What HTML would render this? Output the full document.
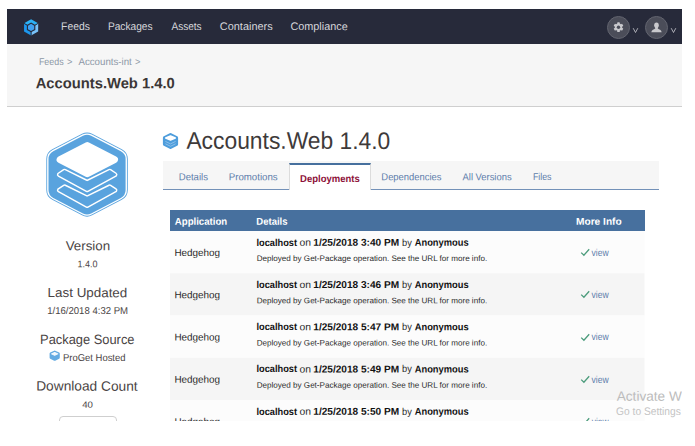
<!DOCTYPE html>
<html>
<head>
<meta charset="utf-8">
<title>Accounts.Web 1.4.0</title>
<style>
html,body{margin:0;padding:0;background:#fff;}
body{width:695px;height:446px;position:relative;overflow:hidden;font-family:"Liberation Sans",sans-serif;}
#page{position:absolute;left:0;top:0;width:682px;height:421px;overflow:hidden;background:#fff;}
.abs{position:absolute;}
.t{position:absolute;left:0;top:0;white-space:pre;transform-origin:0 0;font-family:"Liberation Sans",sans-serif;}
#nav{left:7px;top:9px;width:675px;height:35px;background:#272a3a;}
#hdr{left:7px;top:44px;width:675px;height:62px;background:#f6f6f6;border-bottom:1px solid #cfcfcf;}
.circ{position:absolute;width:21px;height:21px;border-radius:50%;background:#4b4d59;border:1px solid #62646f;}
#tabbar{left:163px;top:161px;width:496px;height:28px;background:#f6f6f6;border-bottom:1px solid #7391b8;}
#tabact{left:289px;top:163px;width:80px;height:25px;background:#fff;border-top:2px solid #47709e;border-left:1px solid #dcdcdc;border-right:1px solid #dcdcdc;}
#thead{left:170px;top:210px;width:475px;height:21px;background:#47709e;}
.row{position:absolute;left:170px;width:475px;height:42px;}
.odd{background:#fbfbfb;}
.even{background:#f4f4f4;}
#btn{left:59px;top:416px;width:56px;height:20px;border:1px solid #cfcfcf;border-radius:4px;background:#fff;}
</style>
</head>
<body>
<div id="page">
<div id="nav" class="abs"></div>
<div id="hdr" class="abs"></div>

<!-- nav logo -->
<svg class="abs" style="left:23px;top:18px" width="17" height="19" viewBox="0 0 17 19">
  <polygon points="8.10,9.45 1.04,5.37 8.10,1.30 15.16,5.37" fill="#2cb2f6"/>
  <polygon points="8.10,9.45 1.04,5.37 1.04,13.53 8.10,17.60" fill="#1c97ee"/>
  <polygon points="8.10,9.45 15.16,5.37 15.16,13.52 8.10,17.60" fill="#79c2f9"/>
  <path d="M8.1 9.45 L1.04 5.37 M8.1 9.45 L15.16 5.37 M8.1 9.45 L8.10 17.60" stroke="#272a3a" stroke-width="1" fill="none"/>
  <polygon points="8.10,4.55 12.34,7.00 12.34,11.90 8.10,14.35 3.86,11.90 3.86,7.00" fill="#272a3a"/>
  <polygon points="8.10,5.85 11.22,7.65 11.22,11.25 8.10,13.05 4.98,11.25 4.98,7.65" fill="#3fa1f1"/>
</svg>

<!-- nav right icons -->
<div class="circ" style="left:607px;top:16px"></div>
<div class="circ" style="left:645px;top:16px"></div>
<svg class="abs" style="left:607px;top:16px" width="23" height="23" viewBox="0 0 23 23">
  <g fill="#c9c9cd">
    <circle cx="11.5" cy="11.2" r="3.6"/>
    <g>
      <rect x="10.2" y="6.3" width="2.6" height="9.8" rx="0.6"/>
      <rect x="10.2" y="6.3" width="2.6" height="9.8" rx="0.6" transform="rotate(60 11.5 11.2)"/>
      <rect x="10.2" y="6.3" width="2.6" height="9.8" rx="0.6" transform="rotate(120 11.5 11.2)"/>
    </g>
  </g>
  <circle cx="11.5" cy="11.2" r="1.7" fill="#4b4d59"/>
</svg>
<svg class="abs" style="left:645px;top:16px" width="23" height="23" viewBox="0 0 23 23">
  <g fill="#c9c9cd">
    <ellipse cx="11.5" cy="9.3" rx="2.3" ry="2.8"/>
    <path d="M6.3 16.2 C6.6 13.8 9 13.6 10.2 12.6 L10.2 11 L12.8 11 L12.8 12.6 C14 13.6 16.4 13.8 16.7 16.2 Z"/>
  </g>
</svg>
<svg class="abs" style="left:632px;top:27px" width="8" height="7" viewBox="0 0 8 7"><path d="M1.2 1.2 L3.5 5.5 L5.8 1.2" fill="none" stroke="#b9b9bf" stroke-width="0.9"/></svg>
<svg class="abs" style="left:669.5px;top:27px" width="8" height="7" viewBox="0 0 8 7"><path d="M1.2 1.2 L3.5 5.5 L5.8 1.2" fill="none" stroke="#b9b9bf" stroke-width="0.9"/></svg>

<!-- big package logo -->
<svg class="abs" style="left:39.7px;top:125px" width="95" height="100" viewBox="40 125 95 100">
  <g stroke-linejoin="round">
    <polygon points="87.05,143.6 116.8,159.1 116.8,190.1 87.05,205.6 57.3,190.1 57.3,159.1" fill="#59a3de" stroke="#59a3de" stroke-width="22"/>
    <polygon points="87.05,143.6 116.8,159.1 116.8,190.1 87.05,205.6 57.3,190.1 57.3,159.1" fill="#ffffff" stroke="#ffffff" stroke-width="20.3"/>
    <polygon points="87.05,143.6 116.8,159.1 116.8,190.1 87.05,205.6 57.3,190.1 57.3,159.1" fill="#59a3de" stroke="#59a3de" stroke-width="17.6"/>
    <polygon points="87.3,145.6 114.5,159.65 87.3,173.7 60.1,159.65" fill="#ffffff" stroke="#ffffff" stroke-width="7"/>
    <polygon points="59.2,174.6 64.6,171 87.15,182.2 109.7,171 115.1,174.6 87.15,189.9" fill="#ffffff" stroke="#ffffff" stroke-width="4.7"/>
    <polygon points="59.2,174.6 64.6,171 87.15,182.2 109.7,171 115.1,174.6 87.15,189.9" fill="#59a3de" stroke="#59a3de" stroke-width="1.8"/>
    <g transform="translate(0,15.7)">
      <polygon points="59.2,174.6 64.6,171 87.15,182.2 109.7,171 115.1,174.6 87.15,189.9" fill="#ffffff" stroke="#ffffff" stroke-width="4.7"/>
      <polygon points="59.2,174.6 64.6,171 87.15,182.2 109.7,171 115.1,174.6 87.15,189.9" fill="#59a3de" stroke="#59a3de" stroke-width="1.8"/>
    </g>
  </g>
</svg>

<!-- h1 icon -->
<svg class="abs" style="left:162px;top:131.5px" width="17" height="18" viewBox="0 0 17 18">
  <g stroke-linejoin="round">
    <polygon points="8.5,2.8 14.4,5.7 14.4,12.3 8.5,15.2 2.6,12.3 2.6,5.7" fill="#4e9ddc" stroke="#4e9ddc" stroke-width="3.4"/>
    <polygon points="8.5,4 13.3,6 8.5,8 3.7,6" fill="#ffffff" stroke="#ffffff" stroke-width="1.5"/>
    <path d="M3.4 9.4 L8.5 11.9 L13.6 9.4 M3.4 11.8 L8.5 14.3 L13.6 11.8" fill="none" stroke="#9cc8ec" stroke-width="0.8"/>
  </g>
</svg>

<!-- small ProGet hosted icon -->
<svg class="abs" style="left:49.3px;top:349.9px" width="11.4" height="11.4" viewBox="0 0 17 18" preserveAspectRatio="none">
  <g stroke-linejoin="round">
    <polygon points="8.5,2.6 14.4,5.6 14.4,12.4 8.5,15.4 2.6,12.4 2.6,5.6" fill="#64abe2" stroke="#64abe2" stroke-width="3.4"/>
    <polygon points="8.5,3.9 13.2,6.1 8.5,8.3 3.8,6.1" fill="#f4f9fd" stroke="#f4f9fd" stroke-width="1.6"/>
  </g>
</svg>

<div id="btn" class="abs"></div>

<div id="tabbar" class="abs"></div>
<div id="tabact" class="abs"></div>

<div id="thead" class="abs"></div>
<svg class="abs" style="left:170px;top:231px" width="475" height="190" viewBox="0 0 475 190">
  <rect x="0" y="0.0" width="474.5" height="42.25" fill="#fcfcfc"/>
  <rect x="0" y="42.25" width="474.5" height="42.25" fill="#f5f5f5"/>
  <rect x="0" y="84.5" width="474.5" height="42.25" fill="#fcfcfc"/>
  <rect x="0" y="126.75" width="474.5" height="42.25" fill="#f5f5f5"/>
  <rect x="0" y="169.0" width="474.5" height="42.25" fill="#fcfcfc"/>
</svg>

<!-- check marks -->
<svg class="abs" style="left:579.5px;top:248.00px" width="11" height="9" viewBox="0 0 11 9"><path d="M1.2 4.6 L3.9 7.2 L9.2 1.3" fill="none" stroke="#4c9c7c" stroke-width="1.3"/></svg>
<svg class="abs" style="left:579.5px;top:290.25px" width="11" height="9" viewBox="0 0 11 9"><path d="M1.2 4.6 L3.9 7.2 L9.2 1.3" fill="none" stroke="#4c9c7c" stroke-width="1.3"/></svg>
<svg class="abs" style="left:579.5px;top:332.50px" width="11" height="9" viewBox="0 0 11 9"><path d="M1.2 4.6 L3.9 7.2 L9.2 1.3" fill="none" stroke="#4c9c7c" stroke-width="1.3"/></svg>
<svg class="abs" style="left:579.5px;top:374.75px" width="11" height="9" viewBox="0 0 11 9"><path d="M1.2 4.6 L3.9 7.2 L9.2 1.3" fill="none" stroke="#4c9c7c" stroke-width="1.3"/></svg>
<svg class="abs" style="left:579.5px;top:417.00px" width="11" height="9" viewBox="0 0 11 9"><path d="M1.2 4.6 L3.9 7.2 L9.2 1.3" fill="none" stroke="#4c9c7c" stroke-width="1.3"/></svg>

<span class="t" style="font-size:11.0px;line-height:11.0px;color:#d6d6db;transform:translate(61.10px,21.10px) rotate(.03deg) scaleX(0.9403)">Feeds</span>
<span class="t" style="font-size:11.0px;line-height:11.0px;color:#d6d6db;transform:translate(107.91px,21.10px) rotate(.03deg) scaleX(0.9253)">Packages</span>
<span class="t" style="font-size:11.0px;line-height:11.0px;color:#d6d6db;transform:translate(171.45px,21.10px) rotate(.03deg) scaleX(0.9138)">Assets</span>
<span class="t" style="font-size:11.0px;line-height:11.0px;color:#d6d6db;transform:translate(219.85px,21.10px) rotate(.03deg) scaleX(0.9923)">Containers</span>
<span class="t" style="font-size:11.0px;line-height:11.0px;color:#d6d6db;transform:translate(290.43px,21.10px) rotate(.03deg) scaleX(0.9863)">Compliance</span>
<span class="t" style="font-size:10.0px;line-height:10.0px;color:#8d98a6;transform:translate(38.90px,57.00px) rotate(.03deg) scaleX(0.8883)">Feeds</span>
<span class="t" style="font-size:10.0px;line-height:10.0px;color:#8d98a6;transform:translate(66.95px,57.00px) rotate(.03deg) scaleX(0.9228)">&gt;</span>
<span class="t" style="font-size:10.0px;line-height:10.0px;color:#8d98a6;transform:translate(78.42px,57.00px) rotate(.03deg) scaleX(0.9705)">Accounts-int</span>
<span class="t" style="font-size:10.0px;line-height:10.0px;color:#8d98a6;transform:translate(135.07px,57.00px) rotate(.03deg) scaleX(0.9331)">&gt;</span>
<span class="t" style="font-size:15.0px;line-height:15.0px;color:#3b3636;font-weight:700;transform:translate(35.70px,75.30px) rotate(.03deg) scaleX(0.9833)">Accounts.Web 1.4.0</span>
<span class="t" style="font-size:13.0px;line-height:13.0px;color:#4a4444;transform:translate(65.68px,239.20px) rotate(.03deg) scaleX(1.0257)">Version</span>
<span class="t" style="font-size:9.5px;line-height:9.5px;color:#4a4444;transform:translate(77.41px,259.30px) rotate(.03deg) scaleX(0.9459)">1.4.0</span>
<span class="t" style="font-size:13.0px;line-height:13.0px;color:#4a4444;transform:translate(47.62px,286.10px) rotate(.03deg) scaleX(1.0300)">Last Updated</span>
<span class="t" style="font-size:10.0px;line-height:10.0px;color:#4a4444;transform:translate(47.18px,305.90px) rotate(.03deg) scaleX(0.9574)">1/16/2018 4:32 PM</span>
<span class="t" style="font-size:13.5px;line-height:13.5px;color:#4a4444;transform:translate(40.05px,332.90px) rotate(.03deg) scaleX(0.9535)">Package Source</span>
<span class="t" style="font-size:10.0px;line-height:10.0px;color:#4a4444;transform:translate(63.05px,352.90px) rotate(.03deg) scaleX(0.9442)">ProGet Hosted</span>
<span class="t" style="font-size:13.5px;line-height:13.5px;color:#4a4444;transform:translate(36.21px,379.60px) rotate(.03deg) scaleX(1.0157)">Download Count</span>
<span class="t" style="font-size:9.0px;line-height:9.0px;color:#4a4444;transform:translate(82.20px,400.70px) rotate(.03deg) scaleX(1.0740)">40</span>
<span class="t" style="font-size:24.0px;line-height:24.0px;color:#3e3a3a;transform:translate(186.41px,128.80px) rotate(.03deg) scaleX(0.9511)">Accounts.Web 1.4.0</span>
<span class="t" style="font-size:10.0px;line-height:10.0px;color:#5d7dab;transform:translate(178.75px,172.20px) rotate(.03deg) scaleX(0.9546)">Details</span>
<span class="t" style="font-size:10.0px;line-height:10.0px;color:#5d7dab;transform:translate(228.74px,172.20px) rotate(.03deg) scaleX(0.9669)">Promotions</span>
<span class="t" style="font-size:10.0px;line-height:10.0px;color:#8d0f38;font-weight:700;transform:translate(300.04px,173.90px) rotate(.03deg) scaleX(0.9506)">Deployments</span>
<span class="t" style="font-size:10.0px;line-height:10.0px;color:#5d7dab;transform:translate(381.36px,172.20px) rotate(.03deg) scaleX(0.9397)">Dependencies</span>
<span class="t" style="font-size:10.0px;line-height:10.0px;color:#5d7dab;transform:translate(462.53px,172.20px) rotate(.03deg) scaleX(0.9394)">All Versions</span>
<span class="t" style="font-size:10.0px;line-height:10.0px;color:#5d7dab;transform:translate(532.88px,172.20px) rotate(.03deg) scaleX(0.8814)">Files</span>
<span class="t" style="font-size:10.0px;line-height:10.0px;color:#ffffff;font-weight:700;transform:translate(174.82px,216.80px) rotate(.03deg) scaleX(0.9621)">Application</span>
<span class="t" style="font-size:10.0px;line-height:10.0px;color:#ffffff;font-weight:700;transform:translate(256.35px,216.80px) rotate(.03deg) scaleX(0.9502)">Details</span>
<span class="t" style="font-size:10.0px;line-height:10.0px;color:#ffffff;font-weight:700;transform:translate(576.01px,216.80px) rotate(.03deg) scaleX(1.0150)">More Info</span>
<span class="t" style="font-size:13.5px;line-height:13.5px;color:#bcbcbc;transform:translate(616.75px,389.80px) rotate(.03deg) scaleX(1.0079)">Activate W</span>
<span class="t" style="font-size:11.0px;line-height:11.0px;color:#c4c4c4;transform:translate(616.11px,405.80px) rotate(.03deg) scaleX(0.9280)">Go to Settings</span>
<span class="t" style="font-size:10.0px;line-height:10.0px;color:#2a2a2a;transform:translate(174.45px,248.10px) rotate(.03deg) scaleX(0.9882)">Hedgehog</span>
<span class="t" style="font-size:10.0px;line-height:10.0px;color:#111111;font-weight:700;transform:translate(256.47px,237.70px) rotate(.03deg) scaleX(0.9226)">localhost</span>
<span class="t" style="font-size:10.0px;line-height:10.0px;color:#2a2a2a;transform:translate(299.56px,237.70px) rotate(.03deg) scaleX(1.0321)">on</span>
<span class="t" style="font-size:10.0px;line-height:10.0px;color:#111111;font-weight:700;transform:translate(313.30px,237.70px) rotate(.03deg) scaleX(1.0094)">1/25/2018 3:40 PM</span>
<span class="t" style="font-size:10.0px;line-height:10.0px;color:#2a2a2a;transform:translate(402.03px,237.70px) rotate(.03deg) scaleX(0.9288)">by</span>
<span class="t" style="font-size:10.0px;line-height:10.0px;color:#111111;font-weight:700;transform:translate(414.72px,237.70px) rotate(.03deg) scaleX(0.9332)">Anonymous</span>
<span class="t" style="font-size:8.0px;line-height:8.0px;color:#2a2a2a;transform:translate(256.72px,254.90px) rotate(.03deg) scaleX(1.0094)">Deployed by Get-Package operation. See the URL for more info.</span>
<span class="t" style="font-size:10.0px;line-height:10.0px;color:#5d7dab;transform:translate(591.48px,247.80px) rotate(.03deg) scaleX(0.8577)">view</span>
<span class="t" style="font-size:10.0px;line-height:10.0px;color:#2a2a2a;transform:translate(174.45px,290.35px) rotate(.03deg) scaleX(0.9882)">Hedgehog</span>
<span class="t" style="font-size:10.0px;line-height:10.0px;color:#111111;font-weight:700;transform:translate(256.47px,279.95px) rotate(.03deg) scaleX(0.9226)">localhost</span>
<span class="t" style="font-size:10.0px;line-height:10.0px;color:#2a2a2a;transform:translate(299.56px,279.95px) rotate(.03deg) scaleX(1.0321)">on</span>
<span class="t" style="font-size:10.0px;line-height:10.0px;color:#111111;font-weight:700;transform:translate(313.30px,279.95px) rotate(.03deg) scaleX(1.0094)">1/25/2018 3:46 PM</span>
<span class="t" style="font-size:10.0px;line-height:10.0px;color:#2a2a2a;transform:translate(402.03px,279.95px) rotate(.03deg) scaleX(0.9288)">by</span>
<span class="t" style="font-size:10.0px;line-height:10.0px;color:#111111;font-weight:700;transform:translate(414.72px,279.95px) rotate(.03deg) scaleX(0.9332)">Anonymous</span>
<span class="t" style="font-size:8.0px;line-height:8.0px;color:#2a2a2a;transform:translate(256.72px,297.15px) rotate(.03deg) scaleX(1.0094)">Deployed by Get-Package operation. See the URL for more info.</span>
<span class="t" style="font-size:10.0px;line-height:10.0px;color:#5d7dab;transform:translate(591.48px,290.05px) rotate(.03deg) scaleX(0.8577)">view</span>
<span class="t" style="font-size:10.0px;line-height:10.0px;color:#2a2a2a;transform:translate(174.45px,332.60px) rotate(.03deg) scaleX(0.9882)">Hedgehog</span>
<span class="t" style="font-size:10.0px;line-height:10.0px;color:#111111;font-weight:700;transform:translate(256.47px,322.20px) rotate(.03deg) scaleX(0.9226)">localhost</span>
<span class="t" style="font-size:10.0px;line-height:10.0px;color:#2a2a2a;transform:translate(299.56px,322.20px) rotate(.03deg) scaleX(1.0321)">on</span>
<span class="t" style="font-size:10.0px;line-height:10.0px;color:#111111;font-weight:700;transform:translate(313.30px,322.20px) rotate(.03deg) scaleX(1.0094)">1/25/2018 5:47 PM</span>
<span class="t" style="font-size:10.0px;line-height:10.0px;color:#2a2a2a;transform:translate(402.03px,322.20px) rotate(.03deg) scaleX(0.9288)">by</span>
<span class="t" style="font-size:10.0px;line-height:10.0px;color:#111111;font-weight:700;transform:translate(414.72px,322.20px) rotate(.03deg) scaleX(0.9332)">Anonymous</span>
<span class="t" style="font-size:8.0px;line-height:8.0px;color:#2a2a2a;transform:translate(256.72px,339.40px) rotate(.03deg) scaleX(1.0094)">Deployed by Get-Package operation. See the URL for more info.</span>
<span class="t" style="font-size:10.0px;line-height:10.0px;color:#5d7dab;transform:translate(591.48px,332.30px) rotate(.03deg) scaleX(0.8577)">view</span>
<span class="t" style="font-size:10.0px;line-height:10.0px;color:#2a2a2a;transform:translate(174.45px,374.85px) rotate(.03deg) scaleX(0.9882)">Hedgehog</span>
<span class="t" style="font-size:10.0px;line-height:10.0px;color:#111111;font-weight:700;transform:translate(256.47px,364.45px) rotate(.03deg) scaleX(0.9226)">localhost</span>
<span class="t" style="font-size:10.0px;line-height:10.0px;color:#2a2a2a;transform:translate(299.56px,364.45px) rotate(.03deg) scaleX(1.0321)">on</span>
<span class="t" style="font-size:10.0px;line-height:10.0px;color:#111111;font-weight:700;transform:translate(313.30px,364.45px) rotate(.03deg) scaleX(1.0094)">1/25/2018 5:49 PM</span>
<span class="t" style="font-size:10.0px;line-height:10.0px;color:#2a2a2a;transform:translate(402.03px,364.45px) rotate(.03deg) scaleX(0.9288)">by</span>
<span class="t" style="font-size:10.0px;line-height:10.0px;color:#111111;font-weight:700;transform:translate(414.72px,364.45px) rotate(.03deg) scaleX(0.9332)">Anonymous</span>
<span class="t" style="font-size:8.0px;line-height:8.0px;color:#2a2a2a;transform:translate(256.72px,381.65px) rotate(.03deg) scaleX(1.0094)">Deployed by Get-Package operation. See the URL for more info.</span>
<span class="t" style="font-size:10.0px;line-height:10.0px;color:#5d7dab;transform:translate(591.48px,374.55px) rotate(.03deg) scaleX(0.8577)">view</span>
<span class="t" style="font-size:10.0px;line-height:10.0px;color:#2a2a2a;transform:translate(174.45px,417.10px) rotate(.03deg) scaleX(0.9882)">Hedgehog</span>
<span class="t" style="font-size:10.0px;line-height:10.0px;color:#111111;font-weight:700;transform:translate(256.47px,406.70px) rotate(.03deg) scaleX(0.9226)">localhost</span>
<span class="t" style="font-size:10.0px;line-height:10.0px;color:#2a2a2a;transform:translate(299.56px,406.70px) rotate(.03deg) scaleX(1.0321)">on</span>
<span class="t" style="font-size:10.0px;line-height:10.0px;color:#111111;font-weight:700;transform:translate(313.30px,406.70px) rotate(.03deg) scaleX(1.0094)">1/25/2018 5:50 PM</span>
<span class="t" style="font-size:10.0px;line-height:10.0px;color:#2a2a2a;transform:translate(402.03px,406.70px) rotate(.03deg) scaleX(0.9288)">by</span>
<span class="t" style="font-size:10.0px;line-height:10.0px;color:#111111;font-weight:700;transform:translate(414.72px,406.70px) rotate(.03deg) scaleX(0.9332)">Anonymous</span>
<span class="t" style="font-size:8.0px;line-height:8.0px;color:#2a2a2a;transform:translate(256.72px,423.90px) rotate(.03deg) scaleX(1.0074)">Deployed by Get-Package operation. See the URL for more info.</span>
<span class="t" style="font-size:10.0px;line-height:10.0px;color:#5d7dab;transform:translate(591.66px,416.80px) rotate(.03deg) scaleX(0.8487)">view</span>
</div>
</body>
</html>
